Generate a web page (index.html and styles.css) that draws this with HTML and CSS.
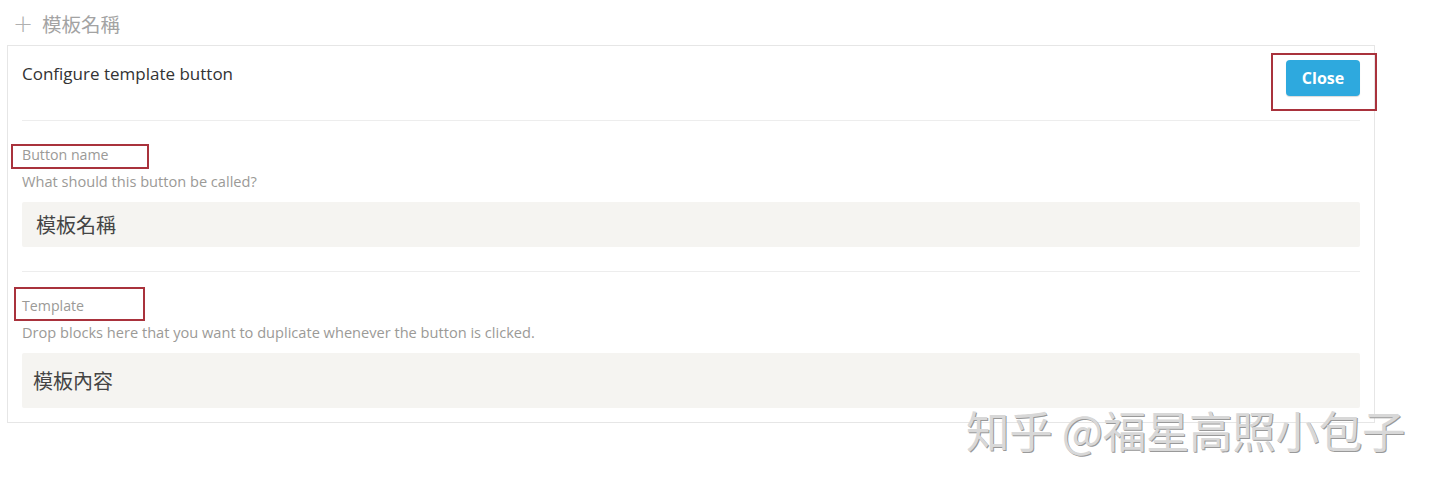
FILE: index.html
```html
<!DOCTYPE html>
<html lang="zh-Hant">
<head>
<meta charset="utf-8">
<title>Configure template button</title>
<link rel="stylesheet" href="styles.css">
</head>
<body>
<div class="page">
  <div class="topline"><span class="plus">+</span><span class="topname">模板名稱</span></div>
  <div class="card">
    <div class="head">
      <div class="title">Configure template button</div>
      <div class="btnwrap">
        <button class="close">Close</button>
        <span class="mark mark-close"></span>
      </div>
    </div>
    <div class="section">
      <div class="label">Button name<span class="mark mark-name"></span></div>
      <div class="desc">What should this button be called?</div>
      <div class="field field-name">模板名稱</div>
    </div>
    <div class="section last">
      <div class="label">Template<span class="mark mark-tpl"></span></div>
      <div class="desc">Drop blocks here that you want to duplicate whenever the button is clicked.</div>
      <div class="field field-tpl">模板內容</div>
    </div>
  </div>
  <div class="watermark">知乎 @福星高照小包子</div>
</div>
</body>
</html>
```
FILE: styles.css
```css
* { box-sizing: border-box; }
body {
  margin: 0;
  background: #fff;
  font-family: "Open Sans", "Noto Sans", "Noto Sans CJK TC", sans-serif;
  color: #37352f;
}
.page {
  position: relative;
  width: 1440px;
  height: 490px;
  overflow: hidden;
}
.topline {
  display: flex;
  align-items: center;
  gap: 9px;
  height: 45px;
  padding-left: 13px;
  padding-top: 2px;
  color: #a3a3a3;
  font-family: "Noto Sans CJK TC", sans-serif;
}
.plus {
  font-family: "DejaVu Sans", sans-serif;
  font-weight: 300;
  font-size: 24px;
  line-height: 1;
  color: #b0b0b0;
}
.topname { font-size: 19.5px; }
.card {
  margin-left: 7px;
  width: 1368px;
  border: 1px solid #e6e6e6;
  padding: 0 14px 14px 14px;
}
.head {
  display: flex;
  justify-content: space-between;
  align-items: flex-start;
  height: 75px;
  padding-top: 14px;
  border-bottom: 1px solid #ededed;
}
.title {
  font-size: 17px;
  line-height: 28px;
  color: #333;
}
.btnwrap { position: relative; }
.close {
  width: 74px;
  height: 36px;
  border: 0;
  border-radius: 4px;
  background: #2ea9de;
  color: #fff;
  font-family: "Open Sans", sans-serif;
  font-weight: 700;
  font-size: 16px;
  box-shadow: 0 1px 1px rgba(0,0,0,0.15);
}
.mark {
  position: absolute;
  border: 2px solid #a9323c;
  pointer-events: none;
}
.mark-close { left: -15px; top: -7px; width: 106px; height: 58px; }
.section {
  padding-top: 24px;
  padding-bottom: 24px;
  border-bottom: 1px solid #ededed;
}
.section.last { border-bottom: 0; padding-bottom: 0; padding-top: 24px; }
.label {
  position: relative;
  font-size: 14.2px;
  line-height: 20px;
  color: #9b9a97;
}
.mark-name { left: -11px; top: -1px; width: 138px; height: 25px; }
.mark-tpl { left: -8px; top: -9px; width: 131px; height: 34px; }
.desc {
  font-size: 14.6px;
  line-height: 20px;
  margin-top: 6px;
  color: #9b9a97;
}
.field {
  margin-top: 11px;
  background: #f5f4f1;
  border-radius: 2px;
  font-family: "Noto Sans CJK TC", sans-serif;
  color: #444;
  font-size: 20px;
  display: flex;
  align-items: center;
}
.field-name { height: 45px; padding-left: 14px; padding-bottom: 1px; }
.field-tpl { height: 55px; padding-left: 11px; }
.watermark {
  position: absolute;
  left: 966px;
  top: 402px;
  font-family: "Noto Sans CJK SC", sans-serif;
  font-size: 43.5px;
  line-height: 56px;
  letter-spacing: -0.3px;
  color: #d8d8d8;
  text-shadow: 1px 1px 0 #999;
}
```
